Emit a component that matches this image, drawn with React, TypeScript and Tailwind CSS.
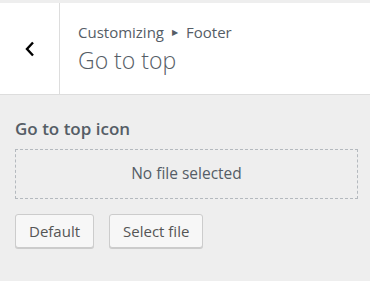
export default function App() {
  const font = { fontFamily: '"Segoe UI", "Open Sans", "Noto Sans", sans-serif' };
  return (
    <div className="h-[281px] w-[370px] bg-[#eeeeee] pt-[3px] text-[#555d66]" style={font}>
      <div className="flex h-[92px] border-b border-[#dddddd] bg-white">
        <button className="flex w-[60px] items-center justify-center border-r border-[#dddddd] text-black">
          <svg width="12" height="16" viewBox="0 0 12 16" fill="none">
            <path d="M9 1.5 L3 8 L9 14.5" stroke="currentColor" strokeWidth="2.4" />
          </svg>
        </button>
        <div className="flex flex-col pl-[18px] pt-[19px]">
          <div className="flex items-center text-[15px] leading-[20px] text-[#555d66]">
            Customizing
            <span className="mx-[8px] text-[8px]">▶</span>
            Footer
          </div>
          <div className="mt-[3px] text-[23px] font-extralight leading-[30px] text-[#555d66]">Go to top</div>
        </div>
      </div>
      <div className="pl-[15px] pr-[12px] pt-[23px]">
        <div className="text-[17px] font-semibold leading-[22px] text-[#555d66]">Go to top icon</div>
        <div className="mt-[9px] flex h-[50px] items-center justify-center border border-dashed border-[#b4b9be] text-[15.5px] text-[#555d66]">
          No file selected
        </div>
        <div className="mt-[15px] flex gap-[15px]">
          <button className="h-[34px] rounded-[3px] border border-[#cccccc] bg-[#f7f7f7] px-[13px] text-[15px] text-[#555555] shadow-[0_1px_0_#cccccc]">
            Default
          </button>
          <button className="h-[34px] rounded-[3px] border border-[#cccccc] bg-[#f7f7f7] px-[13px] text-[15px] text-[#555555] shadow-[0_1px_0_#cccccc]">
            Select file
          </button>
        </div>
      </div>
    </div>
  );
}
